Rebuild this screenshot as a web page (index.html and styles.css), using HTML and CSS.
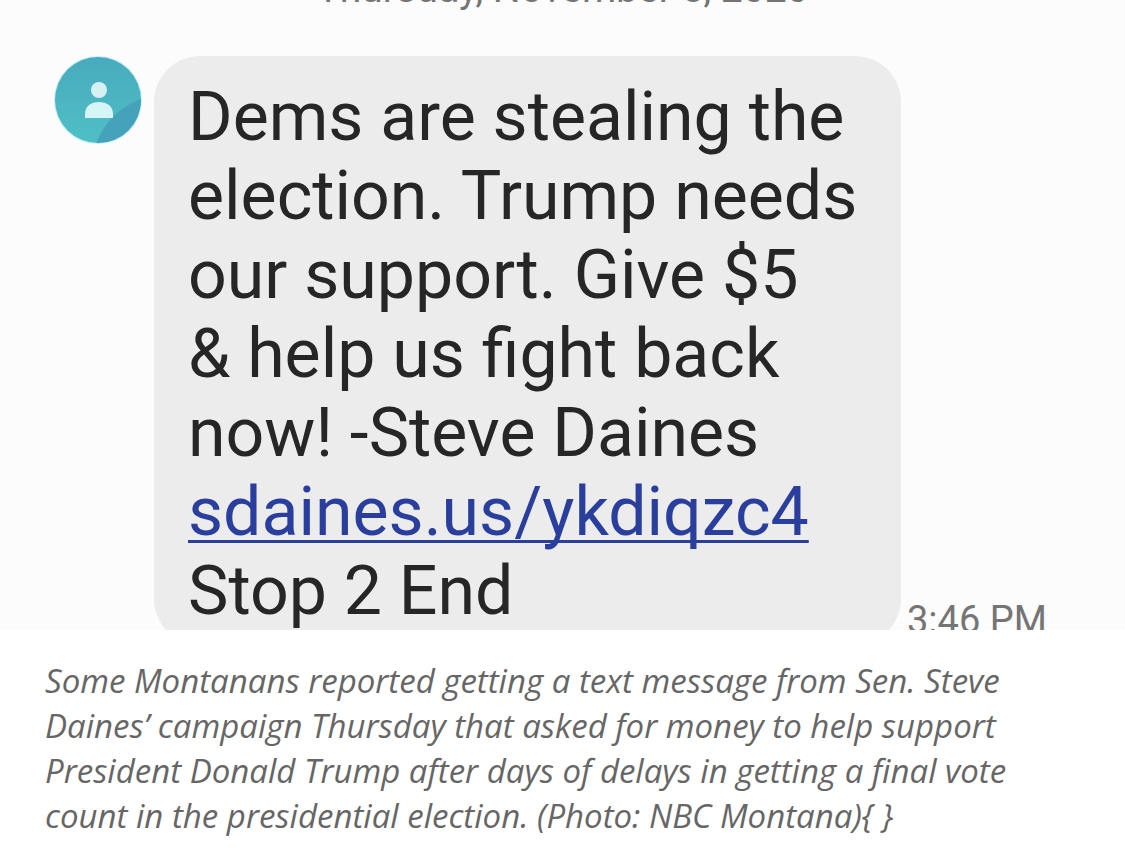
FILE: index.html
```html
<!DOCTYPE html>
<html lang="en">
<head>
  <meta charset="UTF-8" />
  <meta name="viewport" content="width=device-width, initial-scale=1" />
  <title>Text message from Steve Daines</title>
  <link rel="stylesheet" href="styles.css">
</head>
<body>

<figure class="story-photo">
  <div class="screen">
    <div class="date">Thursday, November 5, 2020</div>
    <div class="message">
      <svg class="avatar" viewBox="0 0 88 88" role="img" aria-label="Contact">
        <defs>
          <linearGradient id="avatarFill" x1="0" y1="0" x2="0" y2="1">
            <stop offset="0" stop-color="#48aabd" />
            <stop offset="1" stop-color="#50c0c5" />
          </linearGradient>
          <clipPath id="avatarClip"><circle cx="44" cy="44" r="43" /></clipPath>
        </defs>
        <circle cx="44" cy="44" r="44" fill="#c3f1f7" />
        <g clip-path="url(#avatarClip)">
          <rect width="88" height="88" fill="url(#avatarFill)" />
          <path d="M42 88C50 67 66 50 88 43V88Z" fill="#46a2bb" />
        </g>
        <circle cx="45" cy="34" r="8" fill="#d5f1f3" />
        <path d="M31 62V58C31 50 37 46 45 46S59 50 59 58V62Z" fill="#d5f5f6" />
      </svg>
      <p class="bubble">
        Dems are stealing the<br>
        election. Trump needs<br>
        our support. Give $5<br>
        &amp; help us fight back<br>
        now! -Steve Daines<br>
        <a href="#">sdaines.us/ykdiqzc4</a><br>
        Stop 2 End
      </p>
      <time class="time">3:46 PM</time>
    </div>
  </div>
  <figcaption>
    Some Montanans reported getting a text message from Sen. Steve Daines’ campaign Thursday that asked for money to help support President Donald Trump after days of delays in getting a final vote count in the presidential election. (Photo: NBC Montana){ }
  </figcaption>
</figure>

</body>
</html>
```
FILE: styles.css
```css
body {
  margin: 0;
  background: #fff;
}

.story-photo {
  margin: 0;
}

/* the phone screen is cropped at the top and the bottom */
.screen {
  aspect-ratio: 25 / 14;
  overflow: hidden;
  background: #fcfcfc;
  font-family: Roboto, sans-serif;
}

.date {
  margin-top: -34px;
  padding-bottom: 44px;
  line-height: 46px;
  font-size: 39px;
  text-align: center;
  color: #757575;
}

.message {
  display: flex;
  align-items: flex-start;
  padding-left: 54px;
}

.avatar {
  flex: none;
  width: 88px;
  height: 88px;
  margin-right: 12px;
}

.bubble {
  flex: none;
  box-sizing: border-box;
  width: 747px;
  margin: 0;
  padding: 22px 34px 14px;
  border-radius: 46px;
  background: #ececec;
  color: #262626;
  font-size: 68px;
  line-height: 79px;
  white-space: nowrap;
}

.bubble a {
  color: #2a3f9d;
  text-decoration-thickness: 3px;
  text-underline-offset: 5px;
  text-decoration-skip-ink: none;
}

.time {
  align-self: flex-end;
  margin: 0 0 2px 6px;
  line-height: 46px;
  font-size: 38px;
  color: #757575;
}

figcaption {
  padding: 28px 45px;
  font-family: "Open Sans", sans-serif;
  font-size: 33px;
  font-style: italic;
  line-height: 45px;
  color: #666;
}
```
